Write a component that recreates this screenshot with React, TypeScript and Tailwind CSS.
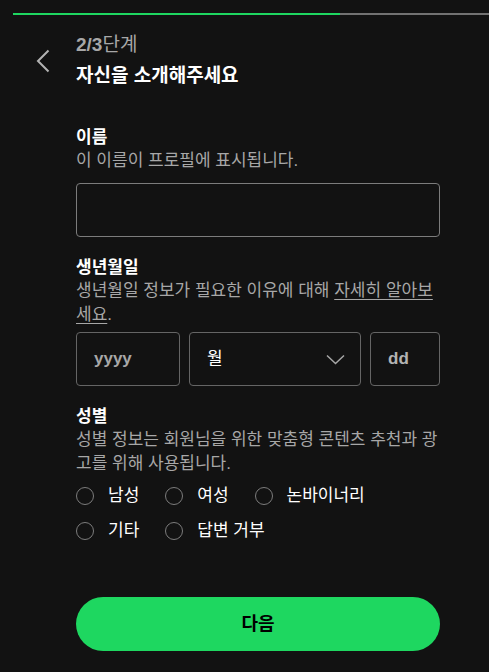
import { useState } from "react";

const font = { fontFamily: '"Liberation Sans", "Noto Sans CJK KR", sans-serif' };

function Radio({ label }: { label: string }) {
  return (
    <label className="flex items-center h-[24px] gap-[14px] cursor-pointer">
      <span className="w-[18px] h-[18px] rounded-full border border-[#7c7c7c] shrink-0" />
      <span className="text-[17px] text-white leading-[24px]">{label}</span>
    </label>
  );
}

export default function App() {
  const [name, setName] = useState("");

  return (
    <div className="w-[489px] h-[672px] bg-[#121212] overflow-hidden" style={font}>
      <div className="pt-[13px] pl-[13px]">
        <div className="flex h-[2px]">
          <div className="w-[327px] bg-[#1ed760]" />
          <div className="flex-1 bg-[#727272]" />
        </div>
      </div>

      <div className="flex items-center mt-[18px]">
        <div className="w-[76px] pl-[36px]">
          <svg width="14" height="24" viewBox="0 0 14 24" fill="none">
            <polyline points="12.5,1.5 2,12 12.5,22.5" stroke="#b3b3b3" strokeWidth="2" />
          </svg>
        </div>
        <div>
          <div className="text-[19px] leading-[24px] text-[#a7a7a7]">
            <span className="font-bold">2/3</span>단계
          </div>
          <div className="text-[19px] leading-[24px] text-white font-bold mt-[7px]">자신을 소개해주세요</div>
        </div>
      </div>

      <div className="pl-[76px] w-[440px]">
        <div className="mt-[39px] text-[17px] leading-[22px] font-bold text-white">이름</div>
        <div className="text-[17px] leading-[24px] text-[#a7a7a7]">이 이름이 프로필에 표시됩니다.</div>
        <input
          value={name}
          onChange={(e) => setName(e.target.value)}
          className="mt-[10px] w-full h-[54px] rounded-[4px] border border-[#7c7c7c] bg-[#121212] px-[16px] text-white outline-none"
        />

        <div className="mt-[20px] text-[17px] leading-[22px] font-bold text-white">생년월일</div>
        <div className="text-[17px] leading-[24px] text-[#a7a7a7] whitespace-nowrap">
          생년월일 정보가 필요한 이유에 대해{" "}
          <span className="underline underline-offset-[3px]">
            자세히 알아보
            <br />
            세요
          </span>
          .
        </div>
        <div className="mt-[5px] flex gap-[9px]">
          <div className="w-[104px] h-[54px] rounded-[4px] border border-[#656565] flex items-center px-[17px] text-[17px] font-bold text-[#a7a7a7]">
            yyyy
          </div>
          <div className="w-[172px] h-[54px] rounded-[4px] border border-[#656565] flex items-center justify-between pl-[17px] pr-[15px] text-[17px] text-white">
            <span>월</span>
            <svg width="19" height="11" viewBox="0 0 19 11" fill="none">
              <polyline points="1,1.5 9.5,9.5 18,1.5" stroke="#a7a7a7" strokeWidth="1.5" />
            </svg>
          </div>
          <div className="flex-1 h-[54px] rounded-[4px] border border-[#656565] flex items-center px-[17px] text-[17px] font-bold text-[#b3b3b3]">
            dd
          </div>
        </div>

        <div className="mt-[20px] text-[17px] leading-[22px] font-bold text-white">성별</div>
        <div className="text-[17px] leading-[24px] text-[#a7a7a7] whitespace-nowrap">
          성별 정보는 회원님을 위한 맞춤형 콘텐츠 추천과 광
          <br />
          고를 위해 사용됩니다.
        </div>
        <div className="mt-[8px] flex flex-wrap gap-x-[26px] gap-y-[11px]">
          <Radio label="남성" />
          <Radio label="여성" />
          <Radio label="논바이너리" />
          <Radio label="기타" />
          <Radio label="답변 거부" />
        </div>

        <button className="mt-[54px] w-full h-[54px] rounded-full bg-[#1ed760] text-[18px] font-bold text-black">
          다음
        </button>
      </div>
    </div>
  );
}
